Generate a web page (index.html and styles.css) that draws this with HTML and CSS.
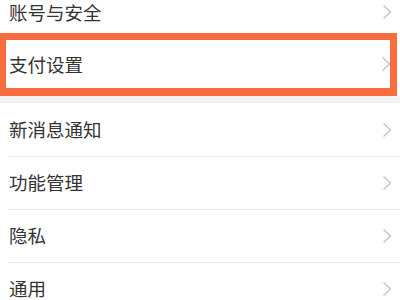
FILE: index.html
```html
<!DOCTYPE html>
<html lang="zh-CN">
<head>
<meta charset="utf-8">
<link rel="stylesheet" href="styles.css">
</head>
<body>
<div class="page">
  <div class="group">
    <div class="row row-first"><span class="label">账号与安全</span><svg class="chev" viewBox="0 0 10 16"><path d="M1.5 1.5 L8.5 8 L1.5 14.5"/></svg></div>
    <div class="row row-hl"><span class="label">支付设置</span><svg class="chev" viewBox="0 0 10 16"><path d="M1.5 1.5 L8.5 8 L1.5 14.5"/></svg></div>
  </div>
  <div class="gap"></div>
  <div class="group">
    <div class="row"><span class="label">新消息通知</span><svg class="chev" viewBox="0 0 10 16"><path d="M1.5 1.5 L8.5 8 L1.5 14.5"/></svg></div>
    <div class="row"><span class="label">功能管理</span><svg class="chev" viewBox="0 0 10 16"><path d="M1.5 1.5 L8.5 8 L1.5 14.5"/></svg></div>
    <div class="row"><span class="label">隐私</span><svg class="chev" viewBox="0 0 10 16"><path d="M1.5 1.5 L8.5 8 L1.5 14.5"/></svg></div>
    <div class="row"><span class="label">通用</span><svg class="chev" viewBox="0 0 10 16"><path d="M1.5 1.5 L8.5 8 L1.5 14.5"/></svg></div>
  </div>
</div>
</body>
</html>
```

FILE: styles.css
```css
html, body {
  margin: 0;
  padding: 0;
  background: #ffffff;
}
.page {
  width: 400px;
  height: 300px;
  overflow: hidden;
  font-family: "Noto Sans CJK SC", "Noto Sans", sans-serif;
  color: #333333;
}
.group {
  background: #ffffff;
}
.row {
  display: flex;
  align-items: center;
  justify-content: space-between;
  height: 53px;
  padding: 0 8px 0 9px;
  box-sizing: border-box;
  position: relative;
}
.row + .row::before {
  content: "";
  position: absolute;
  left: 8px;
  right: 0;
  top: 0;
  height: 1px;
  background: #eeeeee;
}
.row-first {
  height: 33px;
  padding-bottom: 9px;
}
.row-hl {
  height: 63px;
  width: 397px;
  border: 7px solid #f86c3e;
  border-bottom-width: 8px;
  border-left-width: 6px;
  padding-left: 3px;
  padding-right: 0;
}
.row-hl::before {
  display: none;
}
.label {
  font-size: 18.5px;
  line-height: 1;
  letter-spacing: 0;
}
.chev {
  width: 10px;
  height: 16px;
  fill: none;
  stroke: #c4c4c4;
  stroke-width: 1.4;
}
.row-hl .chev {
  margin-right: -1px;
}
.gap {
  height: 7px;
  background: #f3f3f3;
}
```
